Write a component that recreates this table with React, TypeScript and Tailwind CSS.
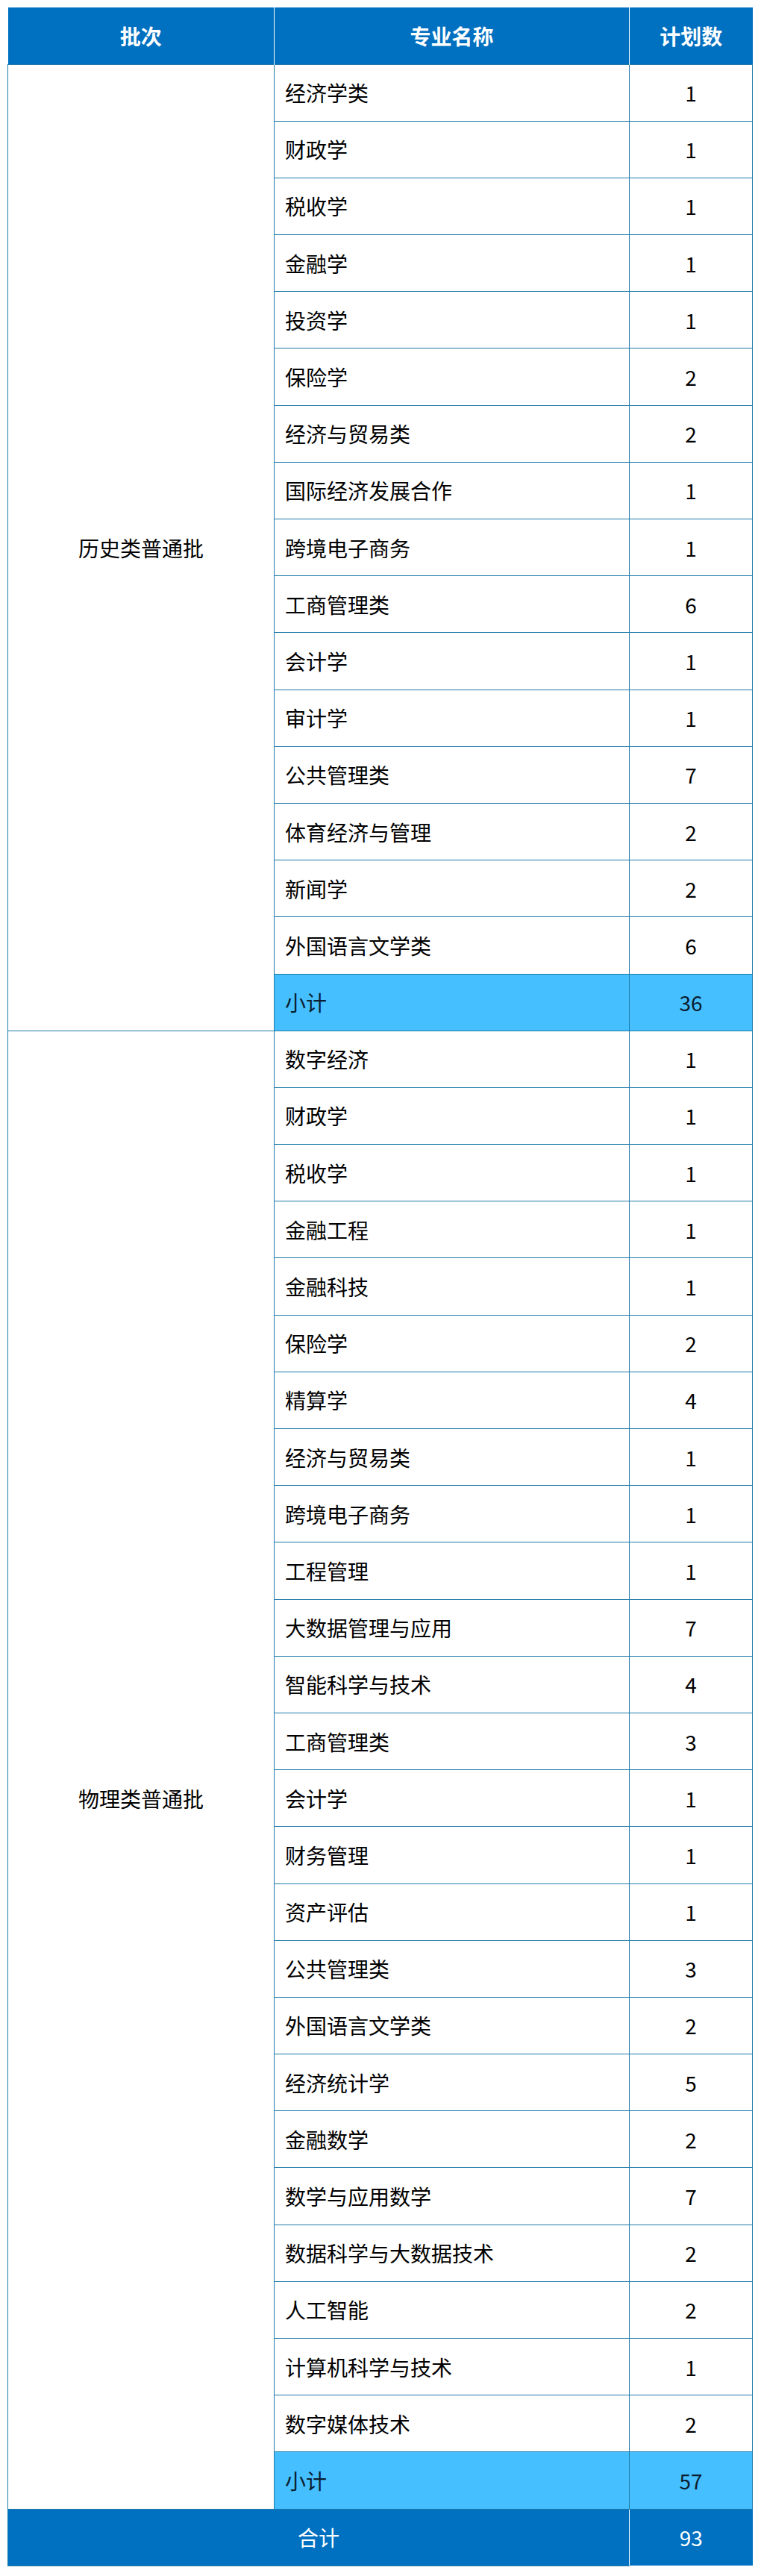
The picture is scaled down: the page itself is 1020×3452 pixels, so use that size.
const history: [string, number][] = [
  ['经济学类', 1],
  ['财政学', 1],
  ['税收学', 1],
  ['金融学', 1],
  ['投资学', 1],
  ['保险学', 2],
  ['经济与贸易类', 2],
  ['国际经济发展合作', 1],
  ['跨境电子商务', 1],
  ['工商管理类', 6],
  ['会计学', 1],
  ['审计学', 1],
  ['公共管理类', 7],
  ['体育经济与管理', 2],
  ['新闻学', 2],
  ['外国语言文学类', 6],
];

const physics: [string, number][] = [
  ['数字经济', 1],
  ['财政学', 1],
  ['税收学', 1],
  ['金融工程', 1],
  ['金融科技', 1],
  ['保险学', 2],
  ['精算学', 4],
  ['经济与贸易类', 1],
  ['跨境电子商务', 1],
  ['工程管理', 1],
  ['大数据管理与应用', 7],
  ['智能科学与技术', 4],
  ['工商管理类', 3],
  ['会计学', 1],
  ['财务管理', 1],
  ['资产评估', 1],
  ['公共管理类', 3],
  ['外国语言文学类', 2],
  ['经济统计学', 5],
  ['金融数学', 2],
  ['数学与应用数学', 7],
  ['数据科学与大数据技术', 2],
  ['人工智能', 2],
  ['计算机科学与技术', 1],
  ['数字媒体技术', 2],
];

const groups = [
  { name: '历史类普通批', rows: history, total: 36, shift: false },
  { name: '物理类普通批', rows: physics, total: 57, shift: true },
];

const cell = 'border border-[#1f7aa8] h-[76.2px] p-0';

export default function App() {
  return (
    <div
      className="bg-white pt-[10px] pl-[10px] pb-[13px] text-[28px] text-black"
      style={{ fontFamily: '"Noto Sans CJK SC", "Noto Sans", sans-serif' }}
    >
      <table className="table-fixed border-collapse w-[998px]">
        <colgroup>
          <col className="w-[357px]" />
          <col className="w-[476px]" />
          <col className="w-[165px]" />
        </colgroup>
        <thead>
          <tr className="bg-[#0070c0] text-white font-bold">
            <th className="h-[76px] border-r border-white">批次</th>
            <th className="h-[76px] border-r border-white">专业名称</th>
            <th className="h-[76px]">计划数</th>
          </tr>
        </thead>
        <tbody>
          {groups.map((g) => (
            <>
              {g.rows.map(([major, n], i) => (
                <tr key={g.name + major}>
                  {i === 0 && (
                    <td
                      rowSpan={g.rows.length + 1}
                      className={`${cell} text-center align-middle ${g.shift ? 'pt-[76px]' : ''}`}
                    >
                      {g.name}
                    </td>
                  )}
                  <td className={`${cell} pl-[14px]`}>{major}</td>
                  <td className={`${cell} text-center`}>{n}</td>
                </tr>
              ))}
              <tr key={g.name + 'sub'} className="text-[#0b1d2e]">
                <td className={`${cell} pl-[14px] bg-[#45bfff]`}>小计</td>
                <td className={`${cell} text-center bg-[#45bfff]`}>{g.total}</td>
              </tr>
            </>
          ))}
          <tr className="bg-[#0070c0] text-white">
            <td colSpan={2} className="h-[76.2px] text-center border border-[#1f7aa8] border-r-white">
              合计
            </td>
            <td className="h-[76.2px] text-center border-t border-t-white">93</td>
          </tr>
        </tbody>
      </table>
    </div>
  );
}
